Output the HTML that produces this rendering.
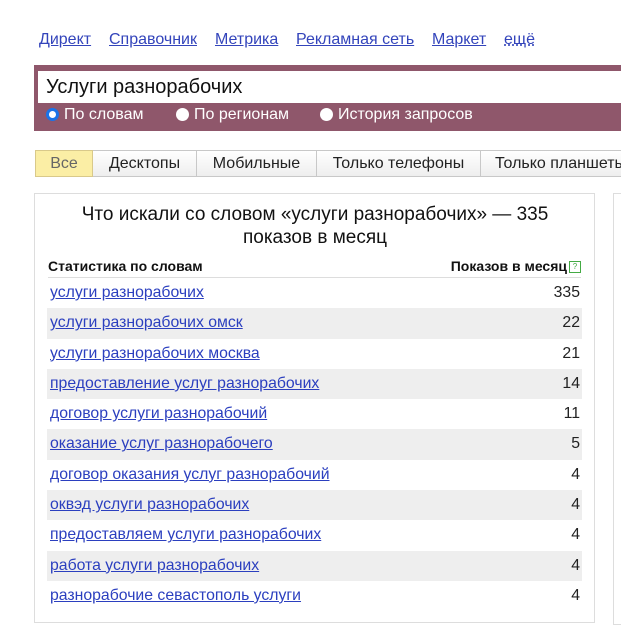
<!DOCTYPE html>
<html><head><meta charset="utf-8"><style>
body{margin:0;width:621px;height:612px;overflow:hidden;background:#fff;font-family:"Liberation Sans",sans-serif;position:relative}
a{color:#2b3fbf;text-decoration:underline}
.nav{position:absolute;top:31px;left:39px;font-size:16px;white-space:nowrap}
.nav a{position:absolute;top:0;color:#3344bb}
.band{position:absolute;left:34px;top:65px;width:600px;height:66px;background:#8f576b}
.inp{position:absolute;left:4px;top:6px;width:600px;height:32px;background:#fff;font-size:20px;line-height:32px;padding-left:8px;color:#111}
.radios{position:absolute;left:0;top:41px;font-size:16px;color:#fff;white-space:nowrap;width:600px;height:20px}
.radios span{position:absolute;top:0}
.r{width:13px;height:13px;border-radius:50%;background:#fff;top:2px!important}
.r.on{box-sizing:border-box;border:3px solid #1a73e8}
.tabs{position:absolute;top:150px;left:35px;height:27px;display:flex;font-size:16px}
.tabs div{border:1px solid #c8c8c8;border-left:none;background:linear-gradient(#fff,#eee);line-height:25px;text-align:center;color:#222;box-sizing:border-box;white-space:nowrap}
.tabs div:first-child{border-left:1px solid #c8c8c8;background:#fbeea5;color:#666;border-color:#d9c98a}
.panel{position:absolute;left:34px;top:193px;width:561px;height:430px;border:1px solid #ddd;box-sizing:border-box}
.panel2{position:absolute;left:613px;top:193px;width:20px;height:430px;border:1px solid #ddd}
h1{margin:0;position:absolute;top:9px;left:0;width:560px;text-align:center;font-weight:normal;font-size:19px;line-height:23px;color:#111}
.hd{position:absolute;top:64px;left:13px;width:533px;font-size:14px;font-weight:bold;color:#111;border-bottom:1px solid #ddd;height:19px;white-space:nowrap}
.hd span.t{position:absolute;right:0;top:0}
.q{display:inline-block;width:10px;height:10px;border:1px solid #4a4;color:#4a4;font-size:8px;line-height:10px;text-align:center;margin-left:2px;vertical-align:2px;font-weight:normal}
.rows{position:absolute;top:84px;left:12px;width:535px}
.row{height:30.3px;line-height:30px;font-size:15.8px;padding-left:3px;position:relative;white-space:nowrap}
.row:nth-child(even){background:#eee}
.row b{font-weight:normal;position:absolute;right:2px;top:0;color:#222}
</style></head><body>
<div class="nav"><a style="left:0">Директ</a><a style="left:70px">Справочник</a><a style="left:176px">Метрика</a><a style="left:257px">Рекламная сеть</a><a style="left:393px">Маркет</a><a style="left:465px;text-decoration:underline dotted">ещё</a></div>
<div class="band"><div class="inp">Услуги разнорабочих</div>
<div class="radios"><span class="r on" style="left:12px"></span><span style="left:30px">По словам</span><span class="r" style="left:142px"></span><span style="left:160px">По регионам</span><span class="r" style="left:286px"></span><span style="left:304px">История запросов</span></div></div>
<div class="tabs"><div style="width:58px">Все</div><div style="width:104px">Десктопы</div><div style="width:120px">Мобильные</div><div style="width:164px">Только телефоны</div><div style="width:150px;text-align:left;padding-left:14px">Только планшеты</div></div>
<div class="panel">
<h1>Что искали со словом «услуги разнорабочих» — 335<br>показов в месяц</h1>
<div class="hd">Статистика по словам<span class="t">Показов в месяц<span class="q">?</span></span></div>
<div class="rows">
<div class="row"><a>услуги разнорабочих</a><b>335</b></div>
<div class="row"><a>услуги разнорабочих омск</a><b>22</b></div>
<div class="row"><a>услуги разнорабочих москва</a><b>21</b></div>
<div class="row"><a>предоставление услуг разнорабочих</a><b>14</b></div>
<div class="row"><a>договор услуги разнорабочий</a><b>11</b></div>
<div class="row"><a>оказание услуг разнорабочего</a><b>5</b></div>
<div class="row"><a>договор оказания услуг разнорабочий</a><b>4</b></div>
<div class="row"><a>оквэд услуги разнорабочих</a><b>4</b></div>
<div class="row"><a>предоставляем услуги разнорабочих</a><b>4</b></div>
<div class="row"><a>работа услуги разнорабочих</a><b>4</b></div>
<div class="row"><a>разнорабочие севастополь услуги</a><b>4</b></div>
</div></div>
<div class="panel2"></div>
</body></html>
